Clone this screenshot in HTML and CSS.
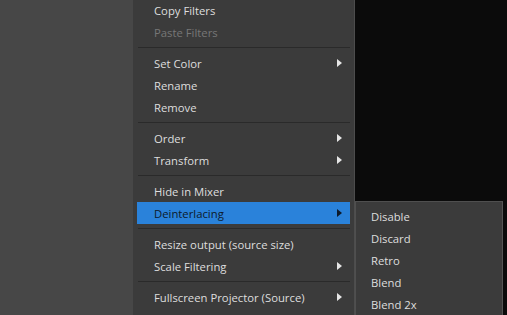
FILE: index.html
```html
<!DOCTYPE html>
<html>
<head>
<meta charset="utf-8">
<link rel="stylesheet" href="styles.css">
</head>
<body>
<div class="screen">
  <div class="side"></div>
  <div class="menu">
    <div class="list">
      <div class="item">Copy Filters</div>
      <div class="item disabled">Paste Filters</div>
      <div class="sep"></div>
      <div class="item">Set Color<span class="arrow"></span></div>
      <div class="item">Rename</div>
      <div class="item">Remove</div>
      <div class="sep"></div>
      <div class="item">Order<span class="arrow"></span></div>
      <div class="item">Transform<span class="arrow"></span></div>
      <div class="sep"></div>
      <div class="item">Hide in Mixer</div>
      <div class="item active">Deinterlacing<span class="arrow"></span></div>
      <div class="sep"></div>
      <div class="item">Resize output (source size)</div>
      <div class="item">Scale Filtering<span class="arrow"></span></div>
      <div class="sep"></div>
      <div class="item">Fullscreen Projector (Source)<span class="arrow"></span></div>
      <div class="item">Windowed Projector (Source)</div>
    </div>
  </div>
  <div class="preview"></div>
  <div class="submenu">
    <div class="item">Disable</div>
    <div class="item">Discard</div>
    <div class="item">Retro</div>
    <div class="item">Blend</div>
    <div class="item">Blend 2x</div>
  </div>
</div>
</body>
</html>
```
FILE: styles.css
```css
html, body {
  margin: 0;
  padding: 0;
  background: #0b0b0b;
}
.screen {
  position: relative;
  display: flex;
  width: 507px;
  height: 315px;
  overflow: hidden;
  font-family: "Open Sans", "Noto Sans", sans-serif;
  font-size: 11.3px;
  color: #dedede;
}
.side {
  width: 133px;
  flex: none;
  background: #474747;
}
.menu {
  width: 221px;
  flex: none;
  background: #3b3b3b;
  border-right: 1px solid #4d4d4d;
  overflow: hidden;
}
.list {
  margin-top: -1px;
  padding: 0 4px;
}
.item {
  box-sizing: border-box;
  height: 22px;
  line-height: 20px;
  padding-top: 2px;
  padding-left: 17px;
  padding-right: 8px;
  display: flex;
  justify-content: space-between;
  align-items: center;
  white-space: nowrap;
}
.item.disabled {
  color: #777777;
}
.item.active {
  background: #2a82da;
  color: #0d1a2b;
}
.arrow {
  width: 0;
  height: 0;
  margin-top: -2px;
  border-top: 4px solid transparent;
  border-bottom: 4px solid transparent;
  border-left: 5px solid #e6e6e6;
}
.active .arrow {
  border-left-color: #0d1a2b;
}
.sep {
  height: 1px;
  margin: 4px 0 4px 1px;
  background: #2a2a2a;
}
.preview {
  flex: 1;
  background: #0b0b0b;
}
.submenu {
  position: absolute;
  left: 355px;
  top: 201px;
  width: 138px;
  padding: 3px 4px 6px;
  background: #3b3b3b;
  border: 1px solid #4f4f4f;
  border-right-color: #555555;
}
.submenu .item {
  padding-left: 11px;
}
```
